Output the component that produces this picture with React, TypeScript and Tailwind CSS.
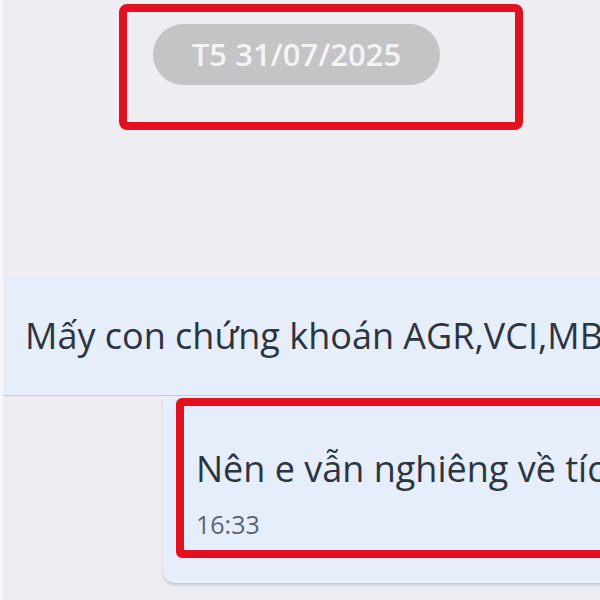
const App = () => {
  return (
    <div
      className="w-[600px] h-[600px] overflow-hidden bg-[#eeeef2] border-l-[3px] border-[#f7f7fa] flex flex-col"
      style={{ fontFamily: '"Open Sans", "Noto Sans", sans-serif' }}
    >
      {/* date separator */}
      <div className="mt-[4px] ml-[116px] w-[404px] h-[126px] border-[8px] border-[#e3101f] rounded-[8px] pt-[12px] pl-[26px] shrink-0">
        <div className="w-[287px] h-[61px] rounded-full bg-[#c4c4c7] flex items-center justify-center text-[#f4f4f4] text-[31px] font-semibold">
          T5 31/07/2025
        </div>
      </div>

      {/* incoming */}
      <div className="mt-[146px] w-[760px] h-[120px] bg-[#e6eefb] border-b border-[#c9ccd4] flex items-center pl-[22px] rounded-r-lg shrink-0">
        <span className="text-[36px] text-[#2c3440] whitespace-nowrap">
          Mấy con chứng khoán AGR,VCI,MBB
        </span>
      </div>

      {/* outgoing */}
      <div className="mt-[2px] ml-[160px] w-[600px] h-[185px] bg-[#e6eefb] rounded-bl-[12px] shadow-[0_2px_3px_rgba(120,120,150,0.35)] pl-[13px] shrink-0">
        <div className="h-[160px] border-[8px] border-[#e3101f] rounded-[6px] pl-[12px] flex flex-col">
          <div className="mt-[40px] text-[36px] leading-[46px] text-[#2c3440] whitespace-nowrap">
            Nên e vẫn nghiêng về tíc
          </div>
          <div className="mt-[17px] text-[25px] leading-[30px] text-[#5c6370]">16:33</div>
        </div>
      </div>
    </div>
  );
};

export default App;
